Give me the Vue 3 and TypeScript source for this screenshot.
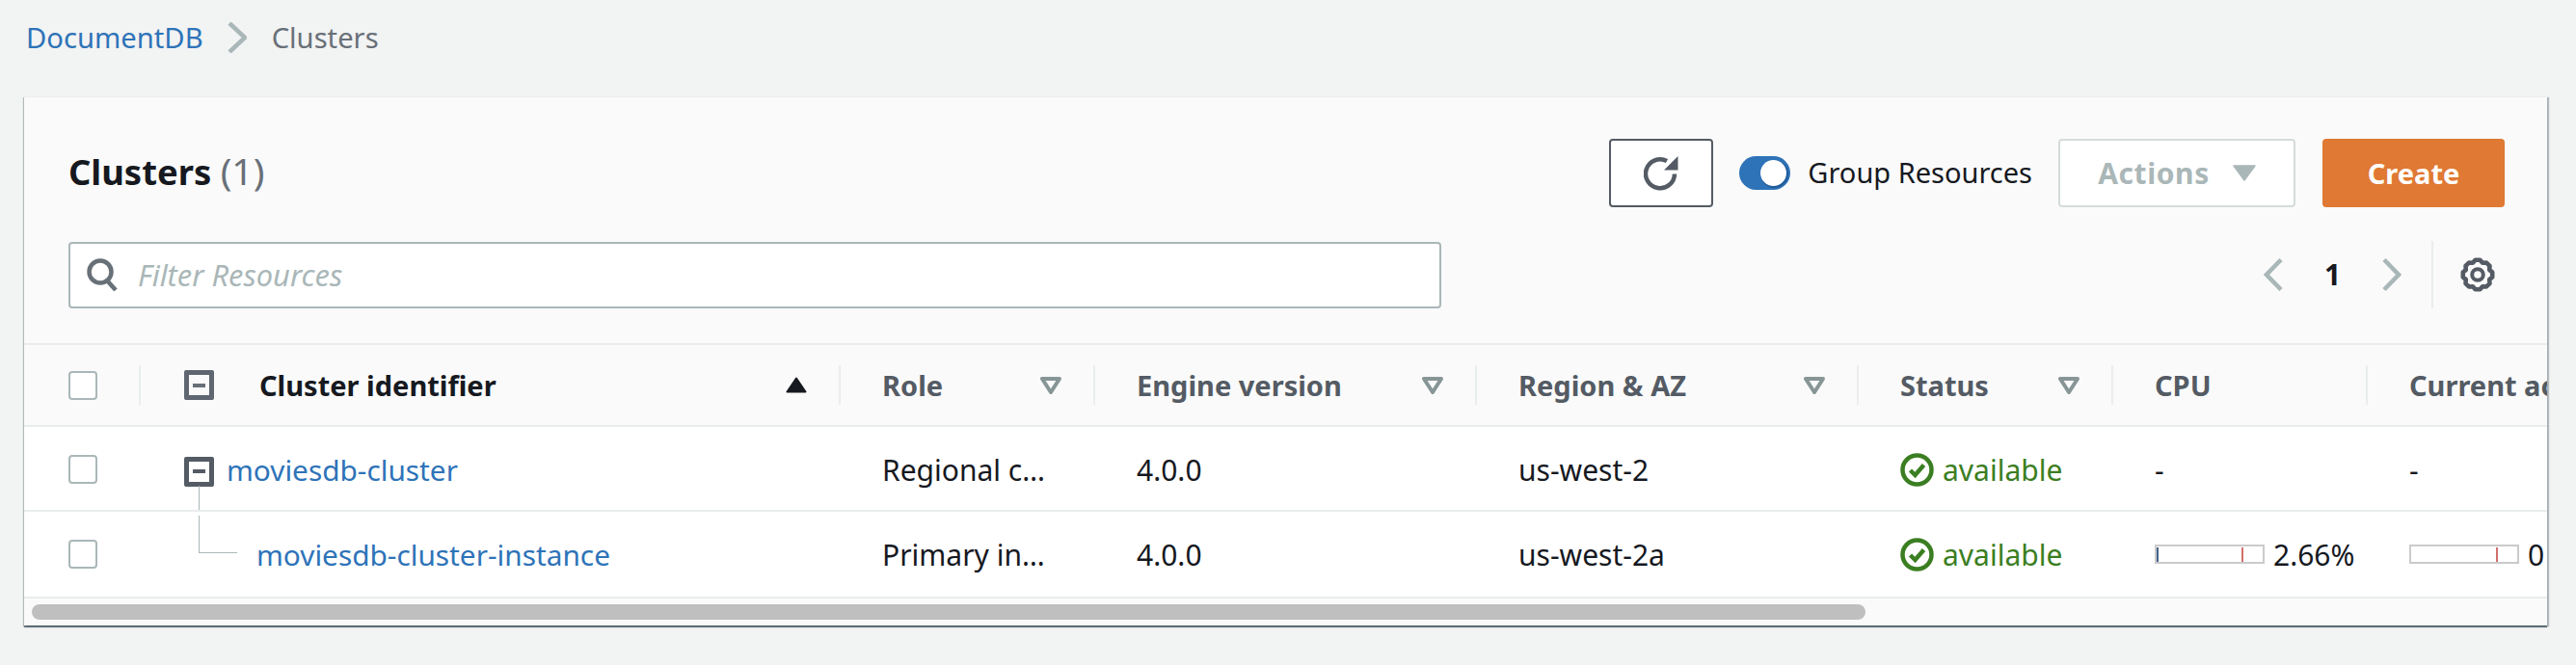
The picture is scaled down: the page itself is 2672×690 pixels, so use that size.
<script setup lang="ts">
const filterCols: { label: string; icon: boolean }[] = [
  { label: 'Role', icon: true },
  { label: 'Engine version', icon: true },
  { label: 'Region & AZ', icon: true },
  { label: 'Status', icon: true },
  { label: 'CPU', icon: false },
  { label: 'Current activity', icon: false },
]

function gearPath(): string {
  const c = 18
  const teeth = 8
  const pts: string[] = []
  for (let i = 0; i < teeth; i++) {
    const a = (i / teeth) * Math.PI * 2 - Math.PI / 2
    const step = (Math.PI * 2) / teeth
    const add = (r: number, t: number) =>
      pts.push(`${(c + r * Math.cos(a + t * step)).toFixed(2)} ${(c + r * Math.sin(a + t * step)).toFixed(2)}`)
    add(13.2, -0.5)
    add(15.4, -0.2)
    add(15.4, 0.2)
    add(13.2, 0.5)
  }
  return 'M' + pts.join('L') + 'Z'
}
const gear = gearPath()
</script>

<template>
  <div class="page">
    <nav class="crumbs">
      <a class="crumb-link">DocumentDB</a>
      <svg class="crumb-sep" width="20" height="32" viewBox="0 0 20 32">
        <path d="M2 1 L18 16 L2 31" fill="none" stroke="#aab7b8" stroke-width="4.5" />
      </svg>
      <span class="crumb-current">Clusters</span>
    </nav>

    <section class="card">
      <header class="card-head">
        <div class="head-row">
          <h1 class="title">Clusters <span class="count">(1)</span></h1>
          <div class="actions">
            <button class="btn btn-refresh" aria-label="Refresh">
              <svg width="36" height="36" viewBox="0 0 36 36">
                <path d="M32 18.5 A15 15 0 1 1 24 5" fill="none" stroke="#545b64" stroke-width="4.5" />
                <path d="M35.5 0 V14.5 H21 Z" fill="#545b64" />
              </svg>
            </button>
            <span class="toggle"><span class="knob"></span></span>
            <span class="toggle-label">Group Resources</span>
            <button class="btn btn-actions">
              Actions
              <svg width="24" height="17" viewBox="0 0 24 17"><path d="M1 1 H23 L12 16 Z" fill="#aab7b8" stroke="#aab7b8" stroke-width="1.5" stroke-linejoin="round" /></svg>
            </button>
            <button class="btn btn-create">Create</button>
          </div>
        </div>
        <div class="filter-row">
          <div class="search">
            <svg width="32" height="34" viewBox="0 0 32 34">
              <circle cx="14" cy="14" r="11.5" fill="none" stroke="#687078" stroke-width="4.5" />
              <path d="M21 23 L30 33" fill="none" stroke="#687078" stroke-width="4.5" />
            </svg>
            <span class="placeholder">Filter Resources</span>
          </div>
          <div class="pager">
            <svg width="20" height="34" viewBox="0 0 20 34"><path d="M18 1.5 L3 17 L18 32.5" fill="none" stroke="#aab7b8" stroke-width="4.5" /></svg>
            <span class="page-num">1</span>
            <svg width="20" height="34" viewBox="0 0 20 34"><path d="M2 1.5 L17 17 L2 32.5" fill="none" stroke="#aab7b8" stroke-width="4.5" /></svg>
            <div class="settings">
              <svg width="36" height="36" viewBox="0 0 36 36">
                <path :d="gear" fill="none" stroke="#545b64" stroke-width="4.6" stroke-linejoin="round" />
                <circle cx="18" cy="18" r="5.8" fill="none" stroke="#545b64" stroke-width="4" />
              </svg>
            </div>
          </div>
        </div>
      </header>

      <div class="table">
        <div class="row row-head">
          <div class="cell cell-check"><span class="check"></span></div>
          <div class="cell cell-head cell-name">
            <span class="tree-box tree-box-head"><i></i></span>
            <span class="name-label">Cluster identifier</span>
            <svg class="sort" width="22" height="17" viewBox="0 0 22 17"><path d="M11 1.5 L20.5 15.5 H1.5 Z" fill="#16191f" stroke="#16191f" stroke-width="2" stroke-linejoin="round" /></svg>
          </div>
          <div v-for="col in filterCols" :key="col.label" class="cell cell-head">
            <span class="head-label">{{ col.label }}</span>
            <svg v-if="col.icon" class="filter-ico" width="22" height="18" viewBox="0 0 22 18"><path d="M2 2 H20 L11 16 Z" fill="#fafafa" stroke="#879596" stroke-width="4" stroke-linejoin="round" /></svg>
          </div>
        </div>

        <div class="row row-parent">
          <div class="cell cell-check"><span class="check"></span></div>
          <div class="cell cell-tree">
            <span class="tree-box"><i></i></span>
            <a class="link">moviesdb-cluster</a>
            <span class="line-down"></span>
          </div>
          <div class="cell"><span class="clip">Regional cluster</span></div>
          <div class="cell">4.0.0</div>
          <div class="cell">us-west-2</div>
          <div class="cell status">
            <svg width="35" height="35" viewBox="0 0 35 35">
              <circle cx="17.5" cy="17.5" r="15" fill="none" stroke="#3b7e22" stroke-width="4.5" />
              <path d="M10.5 18 L15.5 23 L24.5 12.5" fill="none" stroke="#3b7e22" stroke-width="4.5" />
            </svg>
            available
          </div>
          <div class="cell">-</div>
          <div class="cell">-</div>
        </div>

        <div class="row row-child">
          <div class="cell cell-check"><span class="check"></span></div>
          <div class="cell cell-tree cell-child">
            <span class="line-elbow"></span>
            <a class="link">moviesdb-cluster-instance</a>
          </div>
          <div class="cell"><span class="clip">Primary instance</span></div>
          <div class="cell">4.0.0</div>
          <div class="cell">us-west-2a</div>
          <div class="cell status">
            <svg width="35" height="35" viewBox="0 0 35 35">
              <circle cx="17.5" cy="17.5" r="15" fill="none" stroke="#3b7e22" stroke-width="4.5" />
              <path d="M10.5 18 L15.5 23 L24.5 12.5" fill="none" stroke="#3b7e22" stroke-width="4.5" />
            </svg>
            available
          </div>
          <div class="cell metric">
            <span class="bar"><i class="tick-blue"></i><i class="tick-red"></i></span>
            <span>2.66%</span>
          </div>
          <div class="cell metric">
            <span class="bar"><i class="tick-red"></i></span>
            <span>0</span>
          </div>
        </div>

        <div class="scroll-track"><div class="scroll-thumb"></div></div>
      </div>
    </section>
  </div>
</template>

<style>
html, body {
  margin: 0;
  background: #f2f3f3;
}
</style>

<style scoped>
.page {
  width: 2672px;
  height: 690px;
  overflow: hidden;
  background: #f2f3f3;
  font-family: "Noto Sans", "Open Sans", sans-serif;
  font-size: 30px;
  color: #16191f;
  box-sizing: border-box;
}
.crumbs {
  height: 100px;
  padding: 0 0 22px 27px;
  box-sizing: border-box;
  display: flex;
  align-items: center;
  font-size: 29.2px;
}
.crumb-link { color: #2e73b8; }
.crumb-sep { margin: 0 26px 0 25px; }
.crumb-current { color: #687078; }
.card {
  margin-left: 25px;
  width: 2617px;
  height: 549px;
  background: #fafafa;
  box-shadow: 0 2px 1px 0 rgba(0, 28, 36, 0.5), 2px 1px 1px 0 rgba(0, 28, 36, 0.25), -1px 1px 1px 0 rgba(0, 28, 36, 0.2);
  border-top: 1px solid #eaeded;
  box-sizing: border-box;
  overflow: hidden;
}
.card-head { padding: 43px 44px 36px 46px; }
.head-row, .filter-row {
  display: flex;
  align-items: center;
  justify-content: space-between;
}
.head-row { height: 71px; margin-bottom: 35px; }
.filter-row { height: 70px; }
.title {
  margin: 0;
  font-size: 36.4px;
  font-weight: 700;
  line-height: 44px;
  margin-bottom: 4px;
}
.count { font-weight: 400; color: #687078; font-size: 39px; }
.actions { display: flex; align-items: center; }
.btn {
  font: inherit;
  height: 71px;
  box-sizing: border-box;
  border-radius: 4px;
  display: flex;
  align-items: center;
  justify-content: center;
  padding: 0;
  font-weight: 700;
}
.btn-refresh {
  width: 108px;
  background: #fff;
  border: 2px solid #545b64;
  margin-right: 27px;
}
.toggle {
  width: 53px;
  height: 35px;
  border-radius: 18px;
  background: #2e73b8;
  display: flex;
  align-items: center;
  justify-content: flex-end;
  padding-right: 4px;
  box-sizing: border-box;
  margin-top: -1px;
}
.knob {
  width: 27px;
  height: 27px;
  border-radius: 50%;
  background: #fff;
  box-shadow: 1px 1px 0 1px #1f5c9b;
}
.toggle-label {
  margin: -2px 27px 0 18px;
  line-height: 36px;
  font-size: 29px;
}
.btn-actions {
  width: 246px;
  background: #fff;
  border: 2px solid #d5dbdb;
  color: #aab7b8;
  gap: 24px;
  letter-spacing: 0.6px;
}
.btn-create {
  width: 189px;
  margin-left: 28px;
  background: #df7933;
  border: 0;
  color: #fff;
  font-size: 29px;
}
.search {
  width: 1424px;
  height: 69px;
  box-sizing: border-box;
  border: 2px solid #aab7b8;
  border-radius: 4px;
  background: #fff;
  display: flex;
  align-items: center;
  padding-left: 17px;
  gap: 21px;
}
.placeholder { color: #aab7b8; font-style: italic; font-size: 30.8px; }
.pager { display: flex; align-items: center; height: 70px; }
.page-num {
  width: 103px;
  text-align: center;
  font-weight: 700;
  line-height: 34px;
}
.settings {
  margin-left: 31px;
  padding-left: 28px;
  height: 70px;
  border-left: 2px solid #eaeded;
  display: flex;
  align-items: center;
  width: 76px;
  box-sizing: border-box;
}
.table { position: relative; }
.row {
  display: grid;
  grid-template-columns: 119px 726px 264px 396px 396px 264px 264px 264px;
  height: 88px;
  background: #fff;
  border-bottom: 2px solid #eaeded;
  box-sizing: border-box;
}
.row-parent { padding-top: 2px; }
.row-child { height: 90px; }
.row-head {
  height: 87px;
  background: #fafafa;
  border-top: 2px solid #eaeded;
  font-weight: 700;
  font-size: 29px;
  color: #545b64;
}
.cell {
  position: relative;
  display: flex;
  align-items: center;
  padding-left: 45px;
  box-sizing: border-box;
  min-width: 0;
  white-space: nowrap;
}
.cell-check { padding-left: 46px; }
.check {
  width: 30px;
  height: 30px;
  box-sizing: border-box;
  border: 2px solid #aab7b8;
  border-radius: 4px;
  background: #fff;
}
.cell-head {
  justify-content: space-between;
  padding-right: 33px;
}
.cell-head::before {
  content: "";
  position: absolute;
  left: 0;
  top: 21px;
  height: 41px;
  width: 2px;
  background: #eaeded;
}
.cell-name { padding-left: 47px; }
.name-label { color: #16191f; margin-left: 47px; flex: 1; }
.sort { margin-top: -1px; }
.tree-box {
  width: 31px;
  height: 31px;
  box-sizing: border-box;
  border: 5px solid #545b64;
  border-radius: 2px;
  display: flex;
  align-items: center;
  justify-content: center;
  flex: none;
  margin-top: 4px;
}
.tree-box i {
  width: 13px;
  height: 4px;
  background: #545b64;
}
.tree-box-head { border-color: #5f6670; margin-top: 0; }
.tree-box-head i { background: #687078; }
.cell-tree { padding-left: 47px; }
.link { color: #2e73b8; margin-left: 13px; font-size: 29.8px; }
.line-down {
  position: absolute;
  left: 62px;
  top: 59px;
  width: 1px;
  height: 25px;
  background: #aab7b8;
}
.line-elbow {
  display: block;
  position: relative;
  left: 15px;
  top: -21px;
  width: 40px;
  height: 39px;
  box-sizing: border-box;
  border-left: 1px solid #aab7b8;
  border-bottom: 1px solid #aab7b8;
  flex: none;
}
.cell-child .link { margin-left: 35px; }
.clip {
  display: block;
  width: 174px;
  overflow: hidden;
  text-overflow: ellipsis;
}
.status {
  color: #3b7e22;
  gap: 9px;
}
.metric { gap: 9px; }
.bar {
  position: relative;
  width: 114px;
  height: 20px;
  box-sizing: border-box;
  border: 2px solid #cbcbcb;
  background: #fff;
  flex: none;
}
.tick-blue, .tick-red {
  position: absolute;
  top: 1px;
  height: 15px;
  width: 2px;
}
.tick-blue { left: 0; background: #44648c; }
.tick-red { left: 88px; background: #d0716b; }
.scroll-track {
  height: 28px;
  padding: 6px 8px;
  box-sizing: border-box;
  background: #fafafa;
}
.scroll-thumb {
  width: 1902px;
  height: 16px;
  border-radius: 8px;
  background: #bfbfbf;
}
</style>
